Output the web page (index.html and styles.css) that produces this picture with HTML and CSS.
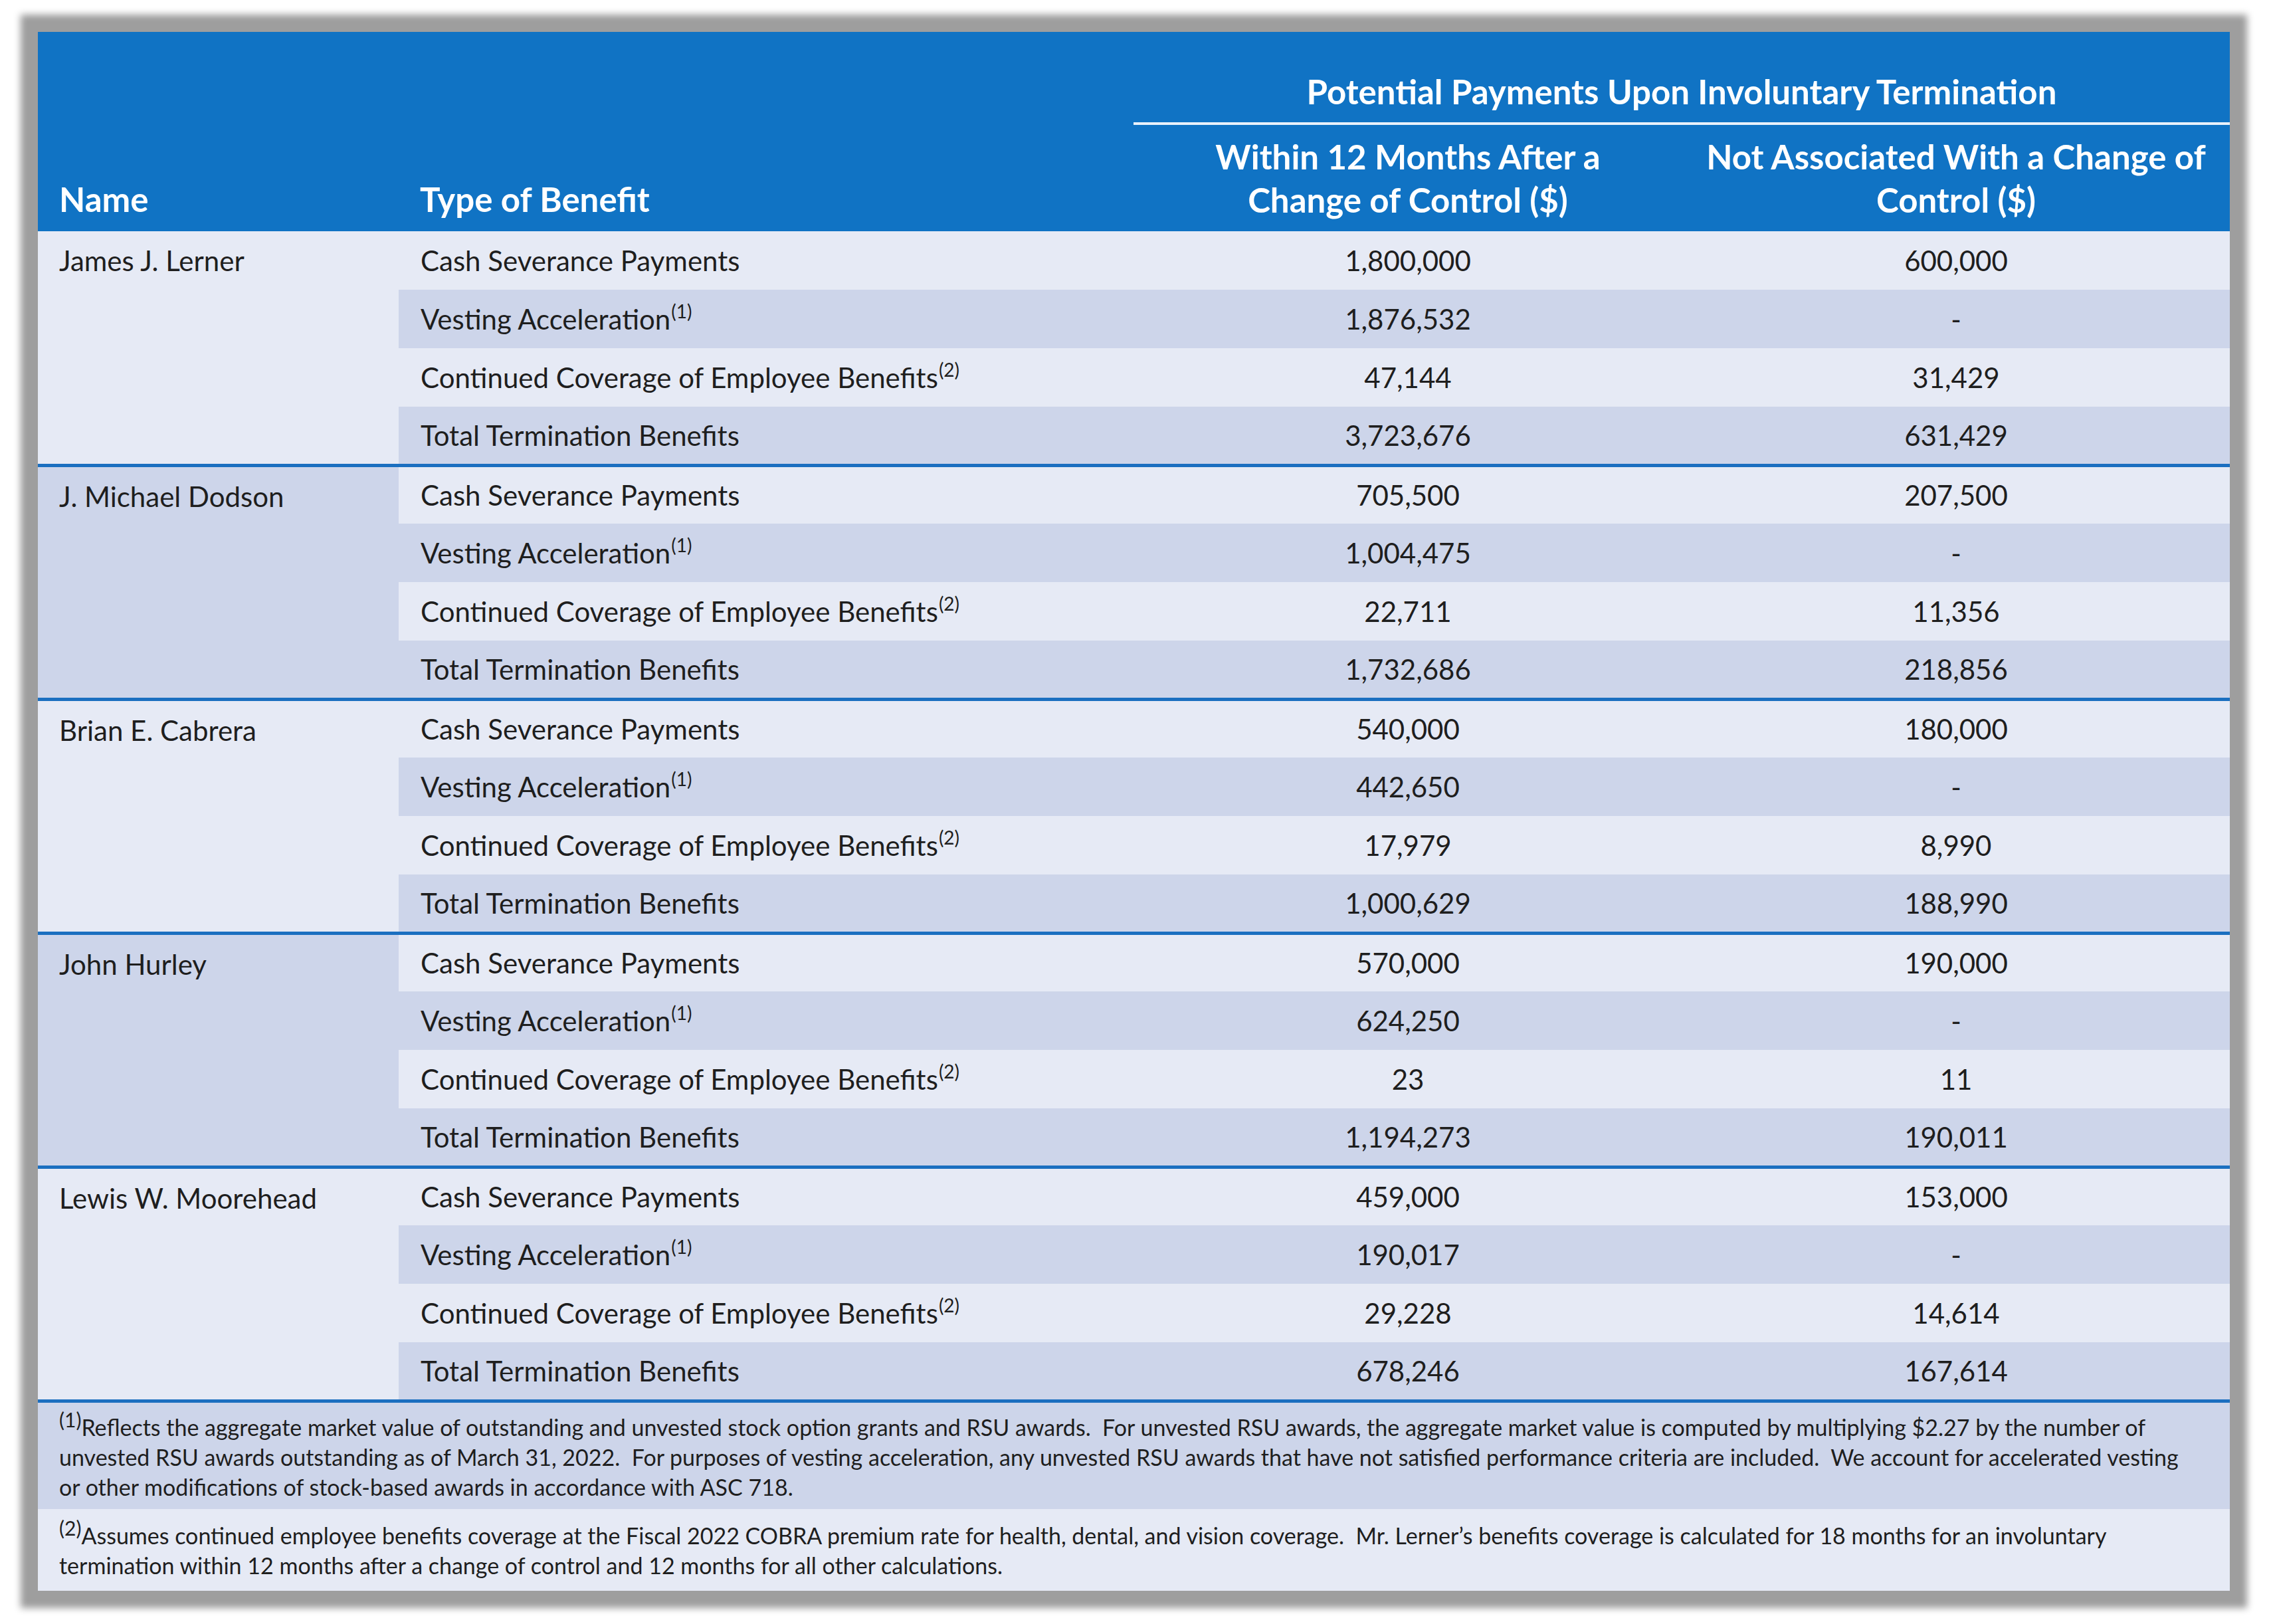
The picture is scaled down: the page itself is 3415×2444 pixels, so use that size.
FILE: index.html
```html
<!DOCTYPE html>
<html lang="en">
<head>
    <meta charset="UTF-8">
    <title>Potential Payments Upon Involuntary Termination</title>
    <link rel="stylesheet" href="styles.css">
</head>
<body>
    <div class="frame">
        <table class="pay-table">
            <colgroup>
                <col class="col-name">
                <col class="col-type">
                <col class="col-coc">
                <col class="col-other">
            </colgroup>
            <thead>
                <tr class="head-top">
                    <th rowspan="2" class="h-left">Name</th>
                    <th rowspan="2" class="h-left">Type of Benefit</th>
                    <th colspan="2" class="h-title">Potential Payments Upon Involuntary Termination</th>
                </tr>
                <tr class="head-sub">
                    <th class="h-col">Within 12 Months After a<br>Change of Control ($)</th>
                    <th class="h-col">Not Associated With a Change of<br>Control ($)</th>
                </tr>
            </thead>
            <tbody>
                <!-- James J. Lerner -->
                <tr>
                    <td rowspan="4" class="name">James J. Lerner</td>
                    <td>Cash Severance Payments</td>
                    <td class="num">1,800,000</td>
                    <td class="num">600,000</td>
                </tr>
                <tr class="alt">
                    <td>Vesting Acceleration<span class="fn">(1)</span></td>
                    <td class="num">1,876,532</td>
                    <td class="num">-</td>
                </tr>
                <tr>
                    <td>Continued Coverage of Employee Benefits<span class="fn">(2)</span></td>
                    <td class="num">47,144</td>
                    <td class="num">31,429</td>
                </tr>
                <tr class="alt last">
                    <td>Total Termination Benefits</td>
                    <td class="num">3,723,676</td>
                    <td class="num">631,429</td>
                </tr>

                <!-- J. Michael Dodson -->
                <tr>
                    <td rowspan="4" class="name dark">J. Michael Dodson</td>
                    <td>Cash Severance Payments</td>
                    <td class="num">705,500</td>
                    <td class="num">207,500</td>
                </tr>
                <tr class="alt">
                    <td>Vesting Acceleration<span class="fn">(1)</span></td>
                    <td class="num">1,004,475</td>
                    <td class="num">-</td>
                </tr>
                <tr>
                    <td>Continued Coverage of Employee Benefits<span class="fn">(2)</span></td>
                    <td class="num">22,711</td>
                    <td class="num">11,356</td>
                </tr>
                <tr class="alt last">
                    <td>Total Termination Benefits</td>
                    <td class="num">1,732,686</td>
                    <td class="num">218,856</td>
                </tr>

                <!-- Brian E. Cabrera -->
                <tr>
                    <td rowspan="4" class="name">Brian E. Cabrera</td>
                    <td>Cash Severance Payments</td>
                    <td class="num">540,000</td>
                    <td class="num">180,000</td>
                </tr>
                <tr class="alt">
                    <td>Vesting Acceleration<span class="fn">(1)</span></td>
                    <td class="num">442,650</td>
                    <td class="num">-</td>
                </tr>
                <tr>
                    <td>Continued Coverage of Employee Benefits<span class="fn">(2)</span></td>
                    <td class="num">17,979</td>
                    <td class="num">8,990</td>
                </tr>
                <tr class="alt last">
                    <td>Total Termination Benefits</td>
                    <td class="num">1,000,629</td>
                    <td class="num">188,990</td>
                </tr>

                <!-- John Hurley -->
                <tr>
                    <td rowspan="4" class="name dark">John Hurley</td>
                    <td>Cash Severance Payments</td>
                    <td class="num">570,000</td>
                    <td class="num">190,000</td>
                </tr>
                <tr class="alt">
                    <td>Vesting Acceleration<span class="fn">(1)</span></td>
                    <td class="num">624,250</td>
                    <td class="num">-</td>
                </tr>
                <tr>
                    <td>Continued Coverage of Employee Benefits<span class="fn">(2)</span></td>
                    <td class="num">23</td>
                    <td class="num">11</td>
                </tr>
                <tr class="alt last">
                    <td>Total Termination Benefits</td>
                    <td class="num">1,194,273</td>
                    <td class="num">190,011</td>
                </tr>

                <!-- Lewis W. Moorehead -->
                <tr>
                    <td rowspan="4" class="name">Lewis W. Moorehead</td>
                    <td>Cash Severance Payments</td>
                    <td class="num">459,000</td>
                    <td class="num">153,000</td>
                </tr>
                <tr class="alt">
                    <td>Vesting Acceleration<span class="fn">(1)</span></td>
                    <td class="num">190,017</td>
                    <td class="num">-</td>
                </tr>
                <tr>
                    <td>Continued Coverage of Employee Benefits<span class="fn">(2)</span></td>
                    <td class="num">29,228</td>
                    <td class="num">14,614</td>
                </tr>
                <tr class="alt last">
                    <td>Total Termination Benefits</td>
                    <td class="num">678,246</td>
                    <td class="num">167,614</td>
                </tr>
            </tbody>
            <tfoot>
                <tr class="note note-1">
                    <td colspan="4"><span class="fn-note">(1)</span>Reflects the aggregate market value of outstanding and unvested stock option grants and RSU awards.&nbsp; For unvested RSU awards, the aggregate market value is computed by multiplying $2.27 by the number of<br>unvested RSU awards outstanding as of March 31, 2022.&nbsp; For purposes of vesting acceleration, any unvested RSU awards that have not satisfied performance criteria are included.&nbsp; We account for accelerated vesting<br>or other modifications of stock-based awards in accordance with ASC 718.</td>
                </tr>
                <tr class="note note-2">
                    <td colspan="4"><span class="fn-note">(2)</span>Assumes continued employee benefits coverage at the Fiscal 2022 COBRA premium rate for health, dental, and vision coverage.&nbsp; Mr. Lerner’s benefits coverage is calculated for 18 months for an involuntary<br>termination within 12 months after a change of control and 12 months for all other calculations.</td>
                </tr>
            </tfoot>
        </table>
    </div>
</body>
</html>
```

FILE: styles.css
```css
html {
    background: #ffffff;
}

body {
    margin: 0;
    padding: 48px 0 47px 57px;
    background: #ffffff;
    font-family: Lato, "Open Sans", sans-serif;
    color: #1e1e1e;
}

.frame {
    width: 3299px;
    box-shadow: 0 0 10px 26px #9e9e9e;
}

.pay-table {
    width: 100%;
    border-collapse: collapse;
    table-layout: fixed;
    background: #e6eaf5;
}

.col-name { width: 543px; }
.col-type { width: 1106px; }
.col-coc { width: 826px; }
.col-other { width: 824px; }

/* header */
.pay-table thead th {
    background: #1073c4;
    color: #ffffff;
    font-weight: 700;
    font-size: 51px;
    line-height: 65px;
    padding: 0;
}

.head-top {
    height: 138px;
}

.head-sub {
    height: 162px;
}

.h-left {
    text-align: left;
    vertical-align: bottom;
    padding: 0 32px 16px 32px !important;
}

.h-title {
    text-align: center;
    vertical-align: bottom;
    padding-bottom: 14px !important;
    border-bottom: 4px solid #e9f2fb;
}

.h-col {
    text-align: center;
    vertical-align: middle;
}

/* body rows */
.pay-table tbody tr {
    height: 88px;
}

.pay-table tbody td {
    font-size: 42px;
    line-height: 50px;
    padding: 0 33px;
    vertical-align: middle;
    background: #e6eaf5;
    white-space: nowrap;
}

.pay-table tbody tr.alt td {
    background: #cdd5ea;
}

.pay-table tbody tr.last td {
    border-bottom: 5px solid #1b6fc0;
}

.pay-table tbody td.name {
    vertical-align: top;
    line-height: 88px;
    padding: 0 32px;
    background: #e6eaf5;
    border-bottom: 5px solid #1b6fc0;
}

.pay-table tbody td.name.dark {
    background: #cdd5ea;
}

.num {
    text-align: center;
}

.fn {
    font-size: 28px;
    position: relative;
    top: -17px;
    line-height: 0;
    margin-left: 1px;
}

/* footnotes */
.note td {
    font-size: 34px;
    line-height: 45px;
    padding: 0 32px;
    vertical-align: top;
    white-space: nowrap;
}

.note-1 {
    height: 163px;
}

.note-1 td {
    background: #cdd5ea;
    padding-top: 14px;
}

.note-2 {
    height: 123px;
}

.note-2 td {
    background: #e6eaf5;
    padding-top: 17px;
}

.fn-note {
    font-size: 30px;
    position: relative;
    top: -13px;
    line-height: 0;
}
```
